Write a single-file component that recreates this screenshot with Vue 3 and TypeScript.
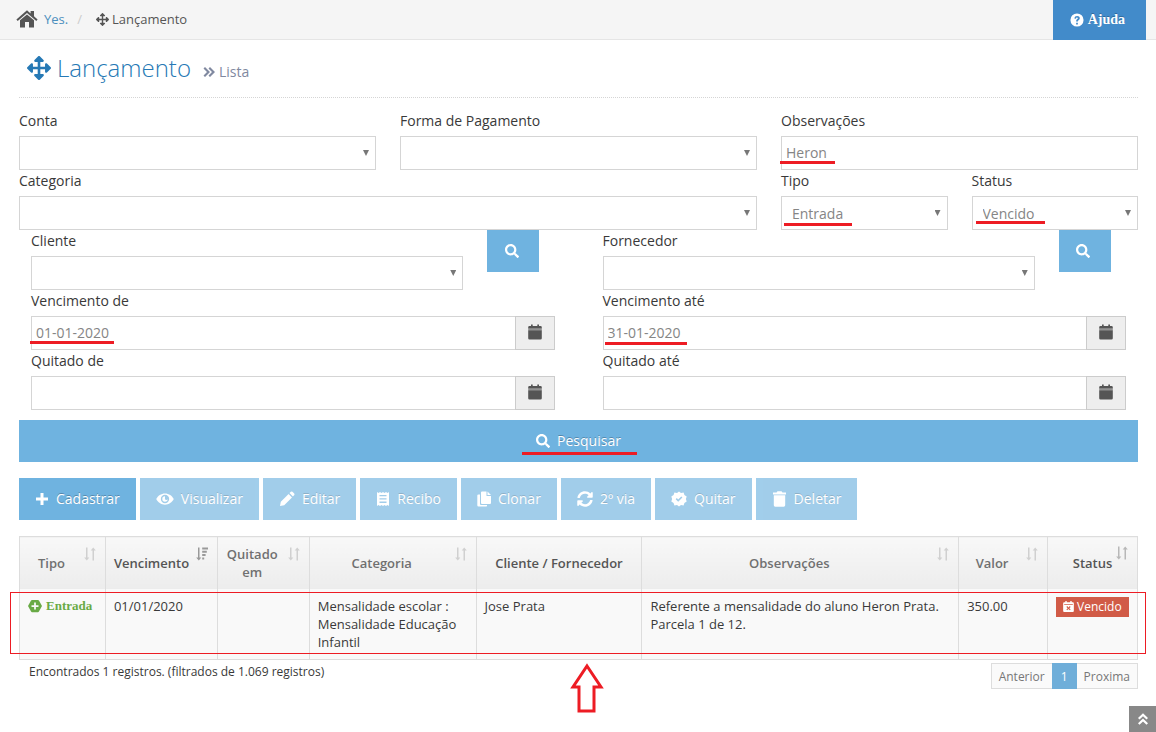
<script setup lang="ts">
import { ref } from 'vue'

interface Glyph {
  box: string
  d: string
  soft?: string
}

const glyphs: Record<string, Glyph> = {
  home: {
    box: '0 0 22 18',
    d: 'M11 0.3 L14.6 3.4 V1 H18 V6.3 L21.6 9.4 L20.3 10.9 L11 3 L1.7 10.9 L0.4 9.4 Z M11 4.4 L18 10.3 V17.6 H13 V12 H9 V17.6 H4 V10.3 Z',
  },
  move: {
    box: '0 0 512 512',
    d: 'M352.2 425.8l-79.2 79.2c-9.4 9.4-24.6 9.4-34 0l-79.2-79.2c-15.1-15.1-4.4-41 17-41h51.2L228 284H127.2v51.2c0 21.4-25.9 32.1-41 17L7 273c-9.4-9.4-9.4-24.6 0-34l79.2-79.2c15.1-15.1 41-4.4 41 17V228H228V127.2h-51.2c-21.4 0-32.1-25.9-17-41L239 7c9.4-9.4 24.6-9.4 34 0l79.2 79.2c15.1 15.1 4.4 41-17 41H284V228h100.8v-51.2c0-21.4 25.9-32.1 41-17L505 239c9.4 9.4 9.4 24.6 0 34l-79.2 79.2c-15.1 15.1-41 4.4-41-17V284H284v100.8h51.2c21.4 0 32.1 25.9 17 41z',
  },
  search: {
    box: '0 0 512 512',
    d: 'M505 442.7L405.3 343c-4.5-4.5-10.6-7-17-7H372c27.6-35.3 44-79.7 44-128C416 93.1 322.9 0 208 0S0 93.1 0 208s93.1 208 208 208c48.3 0 92.7-16.4 128-44v16.3c0 6.4 2.5 12.5 7 17l99.7 99.7c9.4 9.4 24.6 9.4 33.9 0l28.3-28.3c9.4-9.4 9.4-24.6.1-34zM208 336c-70.7 0-128-57.2-128-128 0-70.7 57.2-128 128-128 70.7 0 128 57.2 128 128 0 70.7-57.2 128-128 128z',
  },
  help: {
    box: '0 0 16 16',
    d: 'M8 .5a7.5 7.5 0 1 0 0 15a7.5 7.5 0 0 0 0-15z M7 11h2v2H7z M5 6.2C5.2 4.2 6.4 3.3 8.1 3.3c1.8 0 3.1 1 3.1 2.6c0 1.9-2.1 2.1-2.1 3.3v.6H7v-.8c0-1.9 2-2 2-3c0-.5-.4-.8-1-.8c-.7 0-1 .4-1.200 1.300z',
  },
  plus: { box: '0 0 14 14', d: 'M5.500 1h3v4.500H13v3H8.500V13h-3V8.500H1v-3h4.500z' },
  eye: {
    box: '0 0 16 14',
    d: 'M8 2C4.500 2 1.700 4 .2 7c1.500 3 4.300 5 7.800 5s6.300-2 7.800-5C14.300 4 11.500 2 8 2z M8 3.300a3.700 3.700 0 1 1 0 7.400a3.700 3.700 0 0 1 0-7.400z M8 4.600a2.400 2.400 0 1 0 2.400 2.400a1.200 1.200 0 0 1-2.400-1z',
  },
  pencil: {
    box: '0 0 16 16',
    d: 'M1 15l.8-4.200L9.600 3l3.400 3.400l-7.800 7.800z M10.500 2.100l1.400-1.400q.8-.6 1.600.1l1.700 1.700q.7.8.1 1.600l-1.400 1.400z',
  },
  receipt: {
    box: '0 0 14 16',
    d: 'M1 1l1.500 1L4 1l1.500 1L7 1l1.500 1L10 1l1.500 1L13 1v14l-1.500-1L10 15l-1.500-1L7 15l-1.500-1L4 15l-1.500-1L1 15z M3.500 4v1.300h7V4z M3.500 7.300v1.300h7V7.300z M3.500 10.600v1.300h7v-1.300z',
  },
  copy: {
    box: '0 0 14 16',
    d: 'M5 .5h4.500v4.500H14v7q0 1-1 1H5q-1 0-1-1V1.500q0-1 1-1z M10.500 .5L14 4h-3.500z M1.500 3.500H3v9.500q0 1 1 1h6v.8q0 .7-.7.7H1.500q-1.200 0-1.200-1.200V4.500q0-1 1.200-1z',
  },
  sync: {
    box: '0 0 512 512',
    d: 'M370.700 133.300C339.500 104 298.900 88 255.800 88c-77.400 0-144.300 53.200-162.700 126.900-1.300 5.300-6.200 9.100-11.700 9.100H24.100c-7.500 0-13.200-6.800-11.800-14.200C33.900 94.900 134.800 8 256 8c66.400 0 126.800 26.100 171.300 68.700L463 41c15.100-15.100 41-4.400 41 17V192c0 13.300-10.700 24-24 24H345.900c-21.300 0-32-25.900-16.900-41zM32 296h134c21.400 0 32.100 25.900 17 41l-41.700 41.700c31.200 29.300 71.800 45.300 114.800 45.300 77.500-.1 144.400-53.100 162.800-126.800 1.400-5.400 6.200-9.200 11.700-9.200h57.300c7.500 0 13.200 6.800 11.800 14.200C478.100 417.100 377.200 504 256 504c-66.400 0-126.800-26.100-171.300-68.700L49 471c-15.100 15.100-41 4.400-41-17V320c0-13.300 10.700-24 24-24z',
  },
  seal: {
    box: '0 0 16 16',
    d: 'M8 .4l2 1.600l2.600-.4l.8 2.500l2.300 1.300l-.8 2.600l.8 2.600l-2.300 1.300l-.8 2.500l-2.600-.4l-2 1.600l-2-1.600l-2.600.4l-.8-2.500L.3 10.600L1.100 8L.3 5.400l2.300-1.300l.8-2.500l2.600.4z M4.700 8.200l2.500 2.500l4.200-4.200l-1.100-1.100l-3.100 3.100l-1.400-1.400z',
  },
  trash: {
    box: '0 0 14 16',
    d: 'M.5 1.500H4l1-1.200h4l1 1.200h3.500v2H.5z M1.300 4.300h11.400V14.300q0 1.400-1.400 1.400H2.700Q1.300 15.700 1.300 14.300z',
  },
  calendar: {
    box: '0 0 14 16',
    d: 'M3 .5h1.700V2h4.600V.5H11V2h1.500q1.300 0 1.300 1.300V4.400H.2V3.300Q.2 2 1.500 2H3z M.2 6.300h13.600v7.900q0 1.300-1.300 1.300h-11Q.2 15.500.2 14.200z',
    soft: 'M.2 4.400h13.600v1.900H.2z',
  },
  overdue: {
    box: '0 0 14 16',
    d: 'M3 1h1.700v1.700h4.600V1H11v1.700h1.500q1.300 0 1.300 1.300v9.700q0 1.300-1.300 1.300h-11Q.2 15 .2 13.700V4Q.2 2.700 1.500 2.700H3z M1.500 5v1.200h11V5z M5.300 7.500l-1 1L6 10.200l-1.700 1.700l1 1L7 11.200l1.700 1.700l1-1L8 10.200l1.700-1.700l-1-1L7 9.200z',
  },
  hexPlus: {
    box: '0 0 16 16',
    d: 'M4.600 1h6.800q.7 0 1.100.7L15.700 7.300q.4.700 0 1.400L12.500 14.300q-.4.700-1.100.7H4.600q-.7 0-1.100-.7L.3 8.700q-.4-.7 0-1.400L3.500 1.700q.4-.7 1.100-.7z M7 4v3H4v2h3v3h2V9h3V7H9V4z',
  },
  right: {
    box: '0 0 12 12',
    d: 'M.5 2.500L2 1l5 5l-5 5L.5 9.500L4 6z M5.500 2.500L7 1l5 5l-5 5L5.500 9.500L9 6z',
  },
  up: {
    box: '0 0 12 12',
    d: 'M1 5L6 .3L11 5L9.500 6.500L6 3.300L2.500 6.500z M1 10.200L6 5.500L11 10.200L9.500 11.700L6 8.500L2.500 11.700z',
  },
  sort: {
    box: '0 0 12 14',
    d: 'M2 .5h1.500V10.500H5.300L2.800 13.500L.2 10.500H2z M8.500 13.500H10V3.500h1.800L9.200 .5L6.700 3.500h1.800z',
  },
  sorted: {
    box: '0 0 12 14',
    d: 'M2 .5h1.500V10.500H5.300L2.800 13.500L.2 10.500H2z M6.200 .5H12V2.500H6.200z M6.200 3.800h4.600v2H6.200z M6.200 7.100h3.400v2H6.200z M6.200 10.400h2v2h-2z',
  },
}

const observacoes = ref('Heron')
const tipo = ref('Entrada')
const status = ref('Vencido')
const vencimentoDe = ref('01-01-2020')
const vencimentoAte = ref('31-01-2020')
const quitadoDe = ref('')
const quitadoAte = ref('')

const actions = [
  { label: 'Cadastrar', icon: 'plus', enabled: true },
  { label: 'Visualizar', icon: 'eye', enabled: false },
  { label: 'Editar', icon: 'pencil', enabled: false },
  { label: 'Recibo', icon: 'receipt', enabled: false },
  { label: 'Clonar', icon: 'copy', enabled: false },
  { label: '2º via', icon: 'sync', enabled: false },
  { label: 'Quitar', icon: 'seal', enabled: false },
  { label: 'Deletar', icon: 'trash', enabled: false },
]

const columns = [
  { label: 'Tipo', size: 86, sort: 'sort', tone: '' },
  { label: 'Vencimento', size: 112, sort: 'sorted', tone: 'active' },
  { label: 'Quitado em', size: 92, sort: 'sort', tone: '' },
  { label: 'Categoria', size: 167, sort: 'sort', tone: '' },
  { label: 'Cliente / Fornecedor', size: 166, sort: '', tone: 'plain' },
  { label: 'Observações', size: 317, sort: 'sort', tone: '' },
  { label: 'Valor', size: 89, sort: 'sort', tone: '' },
  { label: 'Status', size: 90, sort: 'sort', tone: 'hovered' },
]
const total = columns.reduce((sum, c) => sum + c.size, 0)
</script>

<template>
  <div class="page">
    <header class="topbar">
      <nav class="crumbs" aria-label="Caminho">
        <svg class="home" :viewBox="glyphs.home.box"><path :d="glyphs.home.d" /></svg>
        <a href="#">Yes.</a>
        <span class="slash">/</span>
        <svg class="i13" :viewBox="glyphs.move.box"><path :d="glyphs.move.d" /></svg>
        <span>Lançamento</span>
      </nav>
      <button class="help" type="button">
        <svg class="i14" :viewBox="glyphs.help.box"><path fill-rule="evenodd" :d="glyphs.help.d" /></svg>
        Ajuda
      </button>
    </header>

    <main class="content">
      <div class="heading">
        <svg class="i24" :viewBox="glyphs.move.box"><path :d="glyphs.move.d" /></svg>
        <h1>Lançamento</h1>
        <p class="sub">
          <svg class="i12" :viewBox="glyphs.right.box"><path :d="glyphs.right.d" /></svg>
          Lista
        </p>
      </div>

      <form @submit.prevent>
        <div class="grid">
          <div class="field s4">
            <label for="conta">Conta</label>
            <div class="control pick"><select id="conta"><option></option></select></div>
          </div>
          <div class="field s4">
            <label for="forma">Forma de Pagamento</label>
            <div class="control pick"><select id="forma"><option></option></select></div>
          </div>
          <div class="field s4">
            <label for="obs">Observações</label>
            <div class="control"><input id="obs" v-model="observacoes" type="text" /><i class="mark m-obs"></i></div>
          </div>
          <div class="field s8">
            <label for="categoria">Categoria</label>
            <div class="control pick"><select id="categoria"><option></option></select></div>
          </div>
          <div class="field s2">
            <label for="tipo">Tipo</label>
            <div class="control pick">
              <select id="tipo" v-model="tipo"><option>Entrada</option><option>Saída</option></select>
              <i class="mark m-tipo"></i>
            </div>
          </div>
          <div class="field s2">
            <label for="status">Status</label>
            <div class="control pick">
              <select id="status" v-model="status"><option>Vencido</option><option>Quitado</option></select>
              <i class="mark m-status"></i>
            </div>
          </div>
        </div>

        <div class="halves">
          <div class="half">
            <div class="grid">
              <div class="field s10">
                <label for="cliente">Cliente</label>
                <div class="control pick"><select id="cliente"><option></option></select></div>
              </div>
              <button class="find" type="button" aria-label="Buscar cliente">
                <svg class="i14" :viewBox="glyphs.search.box"><path :d="glyphs.search.d" /></svg>
              </button>
            </div>
            <div class="field">
              <label for="vde">Vencimento de</label>
              <div class="control group">
                <input id="vde" v-model="vencimentoDe" type="text" />
                <button class="addon" type="button" aria-label="Abrir calendário">
                  <svg class="cal" :viewBox="glyphs.calendar.box"><path :d="glyphs.calendar.d" /><path class="soft" :d="glyphs.calendar.soft" /></svg>
                </button>
                <i class="mark m-de"></i>
              </div>
            </div>
            <div class="field">
              <label for="qde">Quitado de</label>
              <div class="control group">
                <input id="qde" v-model="quitadoDe" type="text" />
                <button class="addon" type="button" aria-label="Abrir calendário">
                  <svg class="cal" :viewBox="glyphs.calendar.box"><path :d="glyphs.calendar.d" /><path class="soft" :d="glyphs.calendar.soft" /></svg>
                </button>
              </div>
            </div>
          </div>
          <div class="half">
            <div class="grid">
              <div class="field s10">
                <label for="fornecedor">Fornecedor</label>
                <div class="control pick"><select id="fornecedor"><option></option></select></div>
              </div>
              <button class="find" type="button" aria-label="Buscar fornecedor">
                <svg class="i14" :viewBox="glyphs.search.box"><path :d="glyphs.search.d" /></svg>
              </button>
            </div>
            <div class="field">
              <label for="vate">Vencimento até</label>
              <div class="control group">
                <input id="vate" v-model="vencimentoAte" type="text" />
                <button class="addon" type="button" aria-label="Abrir calendário">
                  <svg class="cal" :viewBox="glyphs.calendar.box"><path :d="glyphs.calendar.d" /><path class="soft" :d="glyphs.calendar.soft" /></svg>
                </button>
                <i class="mark m-ate"></i>
              </div>
            </div>
            <div class="field">
              <label for="qate">Quitado até</label>
              <div class="control group">
                <input id="qate" v-model="quitadoAte" type="text" />
                <button class="addon" type="button" aria-label="Abrir calendário">
                  <svg class="cal" :viewBox="glyphs.calendar.box"><path :d="glyphs.calendar.d" /><path class="soft" :d="glyphs.calendar.soft" /></svg>
                </button>
              </div>
            </div>
          </div>
        </div>

        <button class="submit" type="submit">
          <span class="submit-text">
            <svg class="i14" :viewBox="glyphs.search.box"><path :d="glyphs.search.d" /></svg>
            Pesquisar
            <i class="mark m-submit"></i>
          </span>
        </button>
      </form>

      <div class="actions">
        <button v-for="a in actions" :key="a.label" type="button" class="action" :disabled="!a.enabled">
          <svg :class="a.icon" :viewBox="glyphs[a.icon].box"><path fill-rule="evenodd" :d="glyphs[a.icon].d" /></svg>
          {{ a.label }}
        </button>
      </div>

      <div class="results">
        <table>
          <colgroup>
            <col v-for="c in columns" :key="c.label" :style="{ width: (c.size / total) * 100 + '%' }" />
          </colgroup>
          <thead>
            <tr>
              <th v-for="c in columns" :key="c.label" scope="col" :class="c.tone">
                {{ c.label }}
                <button v-if="c.sort" class="sorter" type="button" :aria-label="'Ordenar por ' + c.label">
                  <svg :viewBox="glyphs[c.sort].box"><path :d="glyphs[c.sort].d" /></svg>
                </button>
              </th>
            </tr>
          </thead>
          <tbody>
            <tr>
              <td>
                <span class="kind"><svg class="i14" :viewBox="glyphs.hexPlus.box"><path fill-rule="evenodd" :d="glyphs.hexPlus.d" /></svg>Entrada</span>
              </td>
              <td>01/01/2020</td>
              <td></td>
              <td>Mensalidade escolar : Mensalidade Educação Infantil</td>
              <td>Jose Prata</td>
              <td>Referente a mensalidade do aluno Heron Prata. Parcela 1 de 12.</td>
              <td>350.00</td>
              <td>
                <span class="late"><svg :viewBox="glyphs.overdue.box"><path fill-rule="evenodd" :d="glyphs.overdue.d" /></svg>Vencido</span>
              </td>
            </tr>
          </tbody>
        </table>
        <div class="row-frame"></div>
        <svg class="pointer" viewBox="0 0 34 50"><path d="M17 3L31 24H24V48H9V24H3Z" /></svg>
      </div>

      <footer class="foot">
        <p>Encontrados 1 registros. (filtrados de 1.069 registros)</p>
        <nav class="pager" aria-label="Páginas">
          <a href="#">Anterior</a><a href="#" class="current" aria-current="page">1</a><a href="#">Proxima</a>
        </nav>
      </footer>
    </main>

    <a href="#" class="to-top" aria-label="Voltar ao topo">
      <svg class="i12" :viewBox="glyphs.up.box"><path :d="glyphs.up.d" /></svg>
    </a>
  </div>
</template>

<style>
body {
  margin: 0;
  background: #fff;
}
</style>

<style scoped>
.page {
  min-height: 100vh;
  font-family: "Open Sans", sans-serif;
  font-size: 13px;
  line-height: 18px;
  color: #393939;
}
.page *, .page *::after {
  box-sizing: border-box;
}
svg {
  display: block;
  flex: none;
  fill: currentColor;
}
button, input, select {
  font: inherit;
  margin: 0;
  border-radius: 0;
}
button {
  border: 0;
  cursor: pointer;
}
p, h1 {
  margin: 0;
}
a {
  text-decoration: none;
}
.i12 { width: 12px; height: 12px; }
.i13 { width: 13px; height: 13px; }
.i14 { width: 14px; height: 14px; }
.i24 { width: 24px; height: 24px; }

.topbar {
  display: flex;
  justify-content: space-between;
  align-items: flex-start;
  height: 40px;
  padding: 0 10px 0 16px;
  background: #f5f5f5;
  border-bottom: 1px solid #e5e5e5;
}
.crumbs {
  display: flex;
  align-items: center;
  height: 38px;
  color: #555;
}
.home { width: 22px; height: 18px; margin-right: 6px; }
.crumbs a { color: #4c8fbd; }
.slash { margin: 0 14px 0 9px; color: #ccc; }
.crumbs .i13 { margin-right: 3px; }
.help {
  display: flex;
  align-items: center;
  gap: 4px;
  height: 40px;
  padding: 0 21px 0 17px;
  background: #428bca;
  color: #fff;
  font: bold 14px "Liberation Serif", serif;
  text-shadow: 0 -1px 0 rgba(0, 0, 0, 0.25);
}

.content {
  padding: 0 18px 0 19px;
}
.heading {
  display: flex;
  align-items: center;
  height: 58px;
  margin-bottom: 12px;
  padding: 0 0 1px 8px;
  border-bottom: 1px dotted #d5d5d5;
  color: #2679b5;
}
h1 {
  margin: 0 12px 0 6px;
  font-size: 24px;
  font-weight: 300;
  line-height: 32px;
}
.sub {
  display: flex;
  align-items: center;
  gap: 4px;
  padding-top: 7px;
  font-size: 14px;
  color: #8089a0;
}

.grid {
  display: grid;
  grid-template-columns: repeat(12, minmax(0, 1fr));
  column-gap: 24px;
}
.s2 { grid-column: span 2; }
.s4 { grid-column: span 4; }
.s8 { grid-column: span 8; }
.s10 { grid-column: span 10; }
.halves {
  display: grid;
  grid-template-columns: 1fr 1fr;
  column-gap: 24px;
}
.half { padding: 0 12px; }
label {
  display: block;
  margin-bottom: 5px;
  font-size: 14px;
  line-height: 21px;
}
.control {
  position: relative;
  height: 34px;
}
.control input, .control select {
  display: block;
  width: 100%;
  height: 34px;
  padding: 0 4px 2px;
  border: 1px solid #d5d5d5;
  background: #fff;
  color: #858585;
  font-size: 14px;
  outline: 0;
}
.control select {
  appearance: none;
  padding: 1px 24px 0 10px;
}
.pick::after {
  content: "";
  position: absolute;
  top: 14px;
  right: 7px;
  width: 6px;
  height: 6px;
  background: #777;
  clip-path: polygon(0 0, 100% 0, 50% 100%);
  pointer-events: none;
}
.group { display: flex; }
.control.group input { flex: 1; min-width: 0; border-right: 0; }
.addon {
  display: flex;
  align-items: center;
  justify-content: center;
  width: 40px;
  padding: 0 0 2px;
  border: 1px solid #ccc;
  background: #eee;
  color: #555;
}
.cal { width: 14px; height: 16px; }
.soft { opacity: 0.6; }
.find {
  display: flex;
  align-items: center;
  justify-content: center;
  width: 52px;
  height: 42px;
  padding: 0 3px 0 0;
  background: #6fb3e0;
  color: #fff;
}
.submit {
  display: flex;
  align-items: center;
  justify-content: center;
  width: 100%;
  height: 42px;
  margin-top: 10px;
  background: #6fb3e0;
  color: #fff;
  font-size: 14px;
  text-shadow: 0 -1px 0 rgba(0, 0, 0, 0.25);
}
.submit-text {
  position: relative;
  display: flex;
  align-items: center;
  gap: 7px;
}

.mark {
  position: absolute;
  height: 3px;
  background: #ed1c24;
  pointer-events: none;
}
.m-obs { left: -1px; top: 25px; width: 55px; }
.m-tipo { left: 3px; top: 27px; width: 68px; }
.m-status { left: 4px; top: 25px; width: 69px; }
.m-de { left: -1px; top: 25px; width: 84px; }
.m-ate { left: 2px; top: 26px; width: 82px; }
.m-submit { left: -14px; top: 20px; width: 115px; }

.actions {
  display: flex;
  flex-wrap: wrap;
  gap: 4px;
  margin: 16px 0;
}
.action {
  display: flex;
  align-items: center;
  gap: 7px;
  height: 42px;
  padding: 0 16px;
  background: #6fb3e0;
  color: #fff;
  font-size: 14px;
  text-shadow: 0 -1px 0 rgba(0, 0, 0, 0.25);
}
.action:disabled {
  opacity: 0.65;
  cursor: default;
}
.action svg { width: 14px; height: 14px; }
.action .eye { width: 18px; height: 16px; }
.action .pencil, .action .sync, .action .seal { width: 16px; height: 16px; }
.action .trash { width: 15px; height: 16px; }
.action .receipt, .action .copy { height: 16px; }

.results { position: relative; }
table {
  width: 100%;
  table-layout: fixed;
  border-collapse: collapse;
}
th, td {
  border: 1px solid #ddd;
  padding: 8px;
}
th {
  position: relative;
  height: 52px;
  padding: 7px 30px 7px 8px;
  border-bottom: 0;
  background: linear-gradient(#f8f8f8, #ececec);
  color: #707070;
  font-weight: 600;
}
th.active, th.plain, th.hovered { color: #555; }
th.plain, th.hovered { padding-right: 8px; }
td {
  height: 71px;
  border-top: 0;
  background: #f9f9f9;
  vertical-align: top;
}
.sorter {
  position: absolute;
  top: 10px;
  right: 9px;
  padding: 0;
  background: none;
  color: #d0d0d0;
}
.sorter svg { width: 12px; height: 14px; }
.active .sorter { color: #999; }
.hovered .sorter { top: 9px; color: #b8b8b8; }
.kind {
  display: flex;
  align-items: center;
  gap: 4px;
  font-family: "Liberation Serif", serif;
  font-weight: bold;
  color: #69aa46;
}
.late {
  display: inline-flex;
  align-items: center;
  gap: 3px;
  height: 20px;
  padding: 0 7px;
  background: #d15b47;
  color: #fff;
  font-size: 12px;
}
.late svg { width: 11px; height: 13px; }
.row-frame {
  position: absolute;
  top: 56px;
  left: -9px;
  right: -8px;
  height: 62px;
  border: 1px solid #ed1c24;
  pointer-events: none;
}
.pointer {
  position: absolute;
  left: 551px;
  top: 127px;
  width: 34px;
  height: 50px;
  fill: none;
  stroke: #ed1c24;
  stroke-width: 3;
}

.foot {
  display: flex;
  justify-content: space-between;
  align-items: flex-start;
  padding: 3px 0 0 10px;
  font-size: 12px;
}
.pager {
  display: flex;
  border: 1px solid #ddd;
}
.pager a {
  padding: 4px 7px 2px;
  background: #fafafa;
  color: #777;
}
.pager .current {
  margin: -1px 0;
  padding: 5px 9px 3px;
  background: #6faed9;
  color: #fff;
}
.to-top {
  position: fixed;
  right: 0;
  bottom: 0;
  display: flex;
  align-items: center;
  justify-content: center;
  width: 27px;
  height: 26px;
  background: #888;
  color: #fff;
}
</style>
